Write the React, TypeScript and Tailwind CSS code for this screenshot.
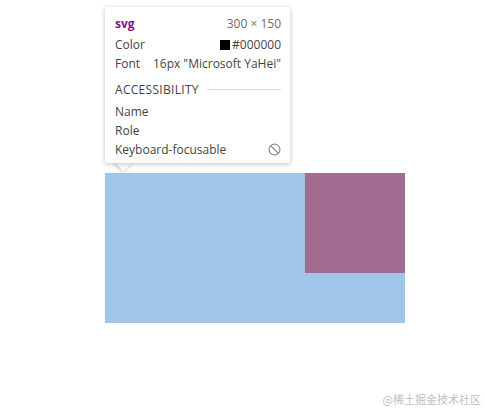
import React from 'react';

const Row: React.FC<{ label: string; children?: React.ReactNode; className?: string }> = ({ label, children, className }) => (
  <div className={`flex items-center justify-between h-[19px] ${className ?? ''}`}>
    <span>{label}</span>
    {children}
  </div>
);

const App: React.FC = () => {
  return (
    <div className="relative w-[485px] h-[413px] bg-white overflow-hidden" style={{ fontFamily: '"Open Sans", "Noto Sans", sans-serif' }}>
      {/* the inspected svg */}
      <div className="pt-[173px] pl-[105px]">
        <div className="w-[300px] h-[150px] bg-[#9fc5e8] flex justify-end">
          <div className="w-[100px] h-[100px] bg-[#a06c90]" />
        </div>
      </div>

      {/* devtools tooltip */}
      <div className="absolute left-[105px] top-[7px] w-[185px]">
        <div className="absolute left-[13px] top-[151px] w-[11px] h-[11px] rotate-45 bg-white shadow-[0_1px_4px_rgba(0,0,0,0.25)]" />
        <div className="relative bg-white rounded-[2px] shadow-[0_1px_5px_rgba(0,0,0,0.25)] pl-[10px] pr-[9px] pt-[6px] pb-[4px] text-[12px] text-[#444]">
          <div className="flex items-center justify-between h-[22px]">
            <span className="font-bold text-[#881280]">svg</span>
            <span className="text-[#6b6b6b]">300 × 150</span>
          </div>
          <Row label="Color">
            <span className="flex items-center gap-[2px]">
              <span className="w-[10px] h-[10px] bg-black inline-block" />
              <span>#000000</span>
            </span>
          </Row>
          <Row label="Font">
            <span>16px "Microsoft YaHei"</span>
          </Row>
          <div className="flex items-center gap-[8px] h-[19px] mt-[7px] mb-[3px]">
            <span className="text-[12px] tracking-[0.3px]">ACCESSIBILITY</span>
            <div className="flex-1 h-px bg-[#dcdcdc]" />
          </div>
          <Row label="Name" />
          <Row label="Role" />
          <Row label="Keyboard-focusable">
            <svg width="13" height="13" viewBox="0 0 24 24" fill="none" stroke="#8a8a8a" strokeWidth="2.2">
              <circle cx="12" cy="12" r="10" />
              <path d="M4.9 4.9 19.1 19.1" />
            </svg>
          </Row>
        </div>
      </div>

      {/* watermark */}
      <div
        className="absolute right-[4px] top-[391px] text-[11px] text-[#c0c0c0]"
        style={{ fontFamily: '"Noto Sans CJK SC", "Noto Sans", sans-serif' }}
      >
        @稀土掘金技术社区
      </div>
    </div>
  );
};

export default App;
